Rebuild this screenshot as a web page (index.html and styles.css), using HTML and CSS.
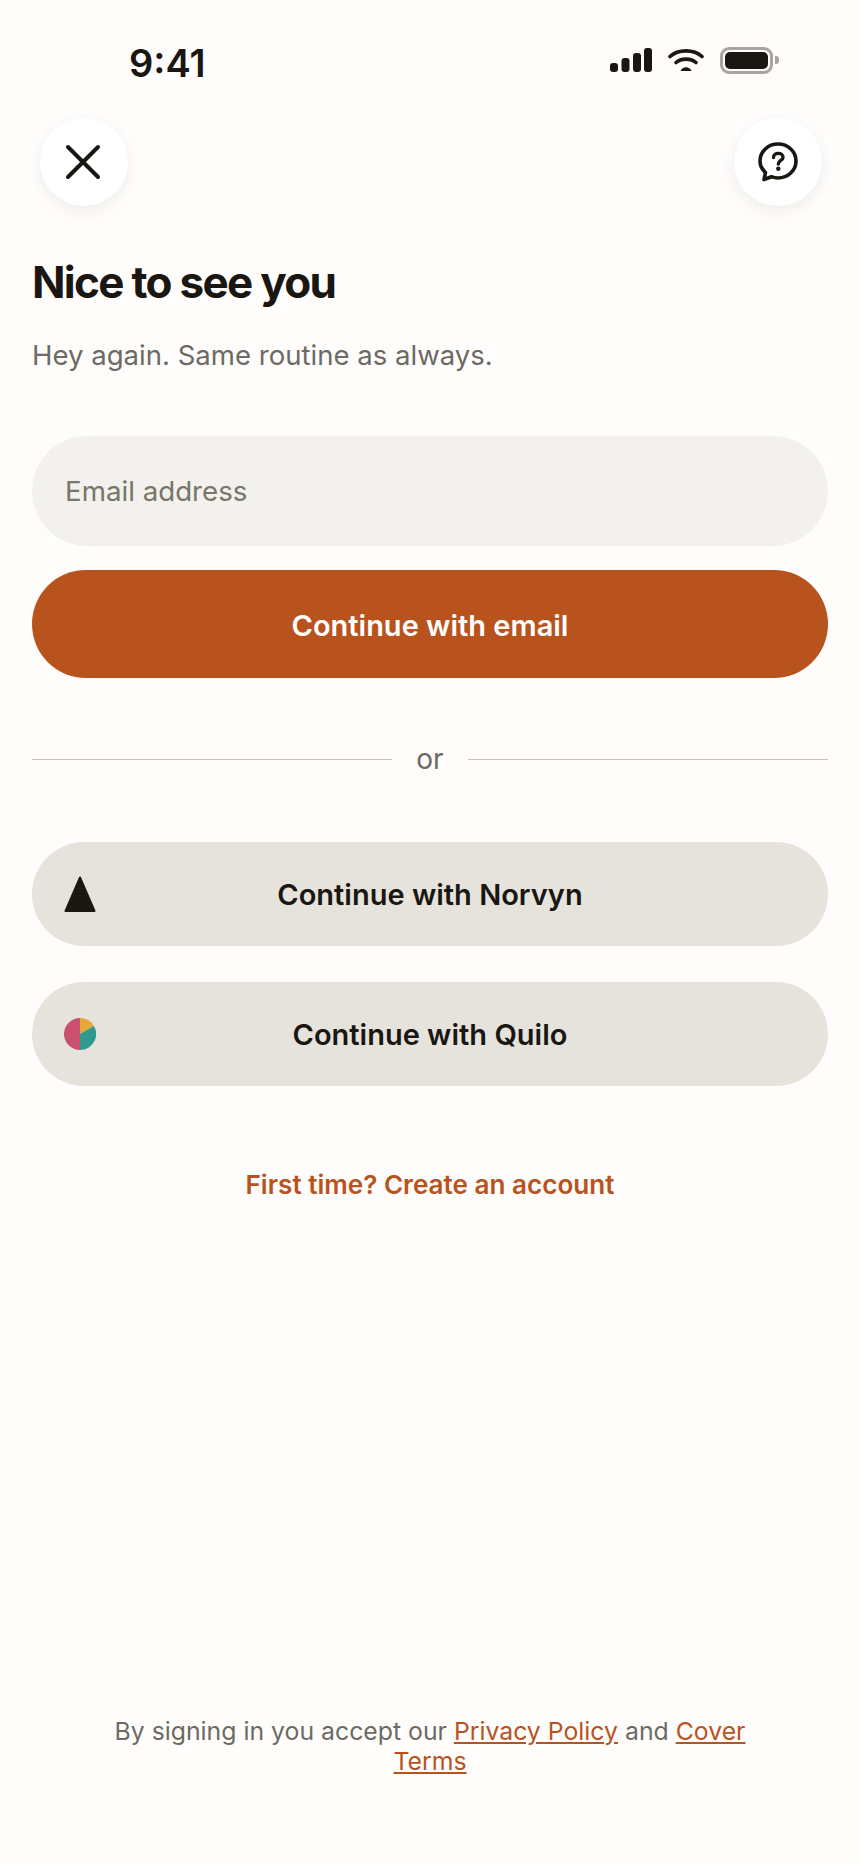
FILE: index.html
```html
<!DOCTYPE html>
<html>
<head>
    <title>Sign in</title>
    <link rel="stylesheet" href="styles.css">
</head>
<body>
    <div class="screen">
        <div class="status-bar">
            <div class="time">9:41</div>
            <div class="status-icons">
                <svg class="signal" width="42" height="24" viewBox="0 0 42 24">
                    <rect x="0" y="15" width="8" height="9" rx="3"/>
                    <rect x="11.500" y="10" width="8" height="14" rx="3"/>
                    <rect x="23" y="5" width="8" height="19" rx="3"/>
                    <rect x="34" y="0" width="8" height="24" rx="3"/>
                </svg>
                <svg class="wifi" width="36" height="24" viewBox="0 0 36 24">
                    <path d="M2 8.500 C10 1 26 1 34 8.500" fill="none" stroke="#1a1712" stroke-width="3.600" stroke-linecap="round"/>
                    <path d="M8 14.500 C13 10 23 10 28 14.500" fill="none" stroke="#1a1712" stroke-width="3.600" stroke-linecap="round"/>
                    <path d="M12.500 23 C14.500 18 21.500 18 23.500 23 Z" fill="#1a1712"/>
                </svg>
                <div class="battery"><div class="battery-fill"></div></div>
                <div class="battery-cap"></div>
            </div>
        </div>

        <div class="top-actions">
            <button class="round-btn">
                <svg class="close-icon" width="36" height="36" viewBox="0 0 36 36">
                    <path d="M3 3 L33 33 M33 3 L3 33" fill="none" stroke="#1a1712" stroke-width="4" stroke-linecap="round"/>
                </svg>
            </button>
            <button class="round-btn">
                <svg width="40" height="40" viewBox="0 0 40 40">
                    <path d="M20 2 C30 2 38 9.500 38 19 C38 28.500 30 36 20 36 C17.500 36 15.500 35.500 13.500 34.700 L6 37.500 L7.500 30.500 C3.800 27.300 2 23.500 2 19 C2 9.500 10 2 20 2 Z" fill="none" stroke="#1a1712" stroke-width="3.600" stroke-linejoin="round"/>
                    <path d="M15.500 15.500 C15.500 10 25 10 25 15.500 C25 18.500 20.300 18.500 20.300 22" fill="none" stroke="#1a1712" stroke-width="3.400" stroke-linecap="round"/>
                    <circle cx="20.300" cy="26.800" r="2.200" fill="#1a1712"/>
                </svg>
            </button>
        </div>

        <div class="title">Nice to see you</div>
        <div class="subtitle">Hey again. Same routine as always.</div>

        <input class="email" type="text" placeholder="Email address">
        <button class="primary">Continue with email</button>

        <div class="divider">
            <div class="line"></div>
            <span>or</span>
            <div class="line"></div>
        </div>

        <button class="social">
            <svg class="social-icon" width="32" height="36" viewBox="0 0 32 36">
                <path d="M16 1.500 L30.500 35 L1.500 35 Z" fill="#1a1712" stroke="#1a1712" stroke-width="2" stroke-linejoin="round"/>
            </svg>
            Continue with Norvyn
        </button>
        <button class="social">
            <svg class="social-icon" width="32" height="32" viewBox="0 0 32 32">
                <path d="M16 0 A16 16 0 0 0 16 32 Z" fill="#c9506f"/>
                <path d="M16 0 A16 16 0 0 1 29.900 8 L16 16 Z" fill="#e3a835"/>
                <path d="M29.900 8 A16 16 0 0 1 16 32 L16 16 Z" fill="#2e9a8e"/>
            </svg>
            Continue with Quilo
        </button>

        <a class="create" href="#">First time? Create an account</a>

        <div class="footer">
            By signing in you accept our <a href="#">Privacy Policy</a> and <a href="#">Cover Terms</a>
        </div>
    </div>
</body>
</html>
```

FILE: styles.css
```css
body {
    margin: 0;
    background-color: #fefdfb;
    color: #1a1712;
    font-family: Inter, "Liberation Sans", sans-serif;
}
.screen {
    display: flex;
    flex-direction: column;
    height: 1864px;
    padding: 0 32px;
    box-sizing: border-box;
    overflow: hidden;
}
.status-bar {
    display: flex;
    justify-content: space-between;
    align-items: center;
    height: 118px;
    padding: 0 49px 0 97px;
}
.time {
    font-size: 38px;
    font-weight: 600;
    margin-top: 8px;
}
.status-icons {
    display: flex;
    align-items: center;
    gap: 16px;
    margin-top: 2px;
}
.signal {
    fill: #1a1712;
}
.battery {
    width: 53px;
    height: 27px;
    box-sizing: border-box;
    border: 3px solid #a8a59f;
    border-radius: 9px;
    padding: 2px;
}
.battery-fill {
    height: 100%;
    background-color: #1a1712;
    border-radius: 5px;
}
.battery-cap {
    width: 4px;
    height: 8px;
    background-color: #a8a59f;
    border-radius: 0 3px 3px 0;
    margin-left: -14px;
}
.top-actions {
    display: flex;
    justify-content: space-between;
    padding: 0 6px 0 8px;
}
.round-btn {
    display: flex;
    align-items: center;
    justify-content: center;
    width: 88px;
    height: 88px;
    padding: 0;
    border: none;
    border-radius: 50%;
    background-color: #ffffff;
    box-shadow: 0 5px 14px rgba(40, 30, 20, 0.07);
}
.close-icon {
    margin-right: 2px;
}
.title {
    font-size: 44px;
    font-weight: 700;
    letter-spacing: -1.700px;
    line-height: 54px;
    margin-top: 49px;
}
.subtitle {
    font-size: 27.550px;
    line-height: 36px;
    color: #6d6a64;
    margin-top: 28px;
}
.email {
    height: 110px;
    box-sizing: border-box;
    padding: 0 33px;
    margin-top: 63px;
    border: none;
    border-radius: 55px;
    background-color: #f2f1ed;
    color: #1a1712;
    font-family: inherit;
    font-size: 27.700px;
    flex: none;
}
.email::placeholder {
    color: #787569;
    opacity: 1;
}
.primary {
    height: 108px;
    margin-top: 24px;
    padding-top: 3px;
    border: none;
    border-radius: 54px;
    background-color: #b8531e;
    color: #ffffff;
    font-family: inherit;
    font-size: 29px;
    font-weight: 600;
    flex: none;
}
.divider {
    display: flex;
    align-items: center;
    gap: 24px;
    height: 36px;
    margin-top: 63px;
    margin-bottom: 65px;
    color: #6d6a64;
    font-size: 28px;
}
.line {
    flex: 1;
    height: 1px;
    background-color: #c4c2bc;
}
.social {
    position: relative;
    height: 104px;
    margin-bottom: 36px;
    border: none;
    border-radius: 52px;
    background-color: #e6e3dd;
    color: #1a1712;
    font-family: inherit;
    font-size: 29px;
    font-weight: 600;
    flex: none;
}
.social-icon {
    position: absolute;
    left: 32px;
    top: 50%;
    transform: translateY(-50%);
}
.create {
    display: block;
    margin-top: 45px;
    color: #b8531e;
    font-size: 26.100px;
    font-weight: 600;
    line-height: 36px;
    text-align: center;
    text-decoration: none;
}
.footer {
    margin-top: auto;
    margin-bottom: 88px;
    padding: 0 60px;
    color: #6d6a64;
    font-size: 24.800px;
    line-height: 30px;
    text-align: center;
}
.footer a {
    color: #b8531e;
}
```
